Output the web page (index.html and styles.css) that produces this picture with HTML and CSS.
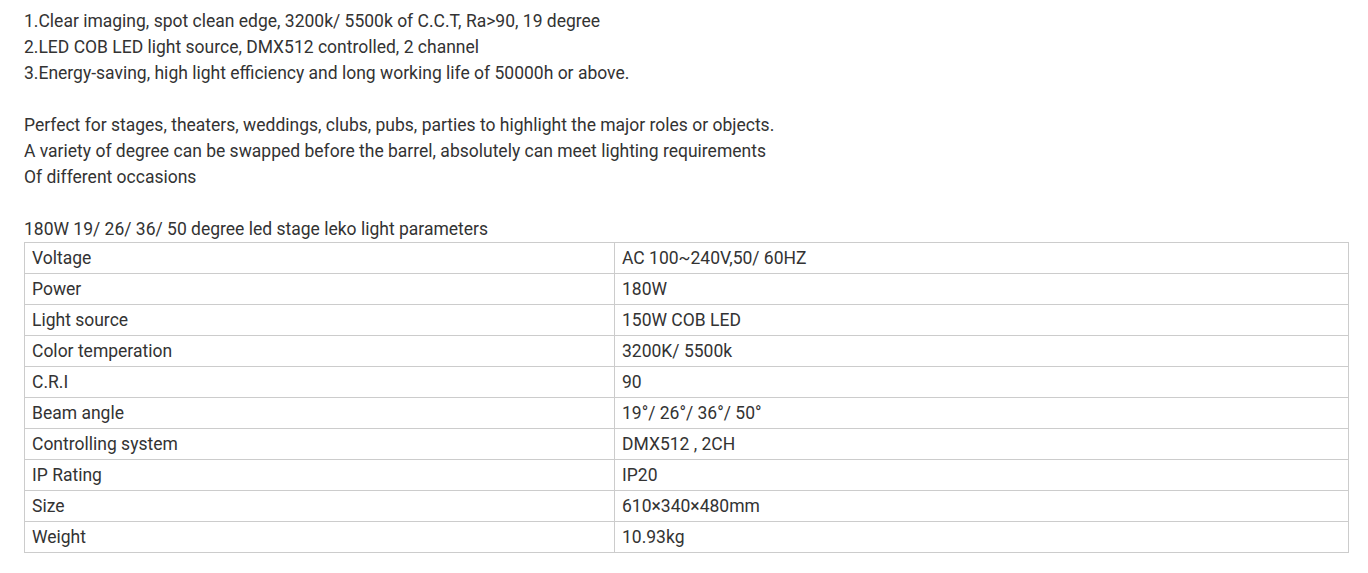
FILE: index.html
```html
<!DOCTYPE html>
<html>
<head>
<meta charset="utf-8">
<link rel="stylesheet" href="styles.css">
</head>
<body>
<div class="content">
  <p class="para">1.Clear imaging, spot clean edge, 3200k/ 5500k of C.C.T, Ra&gt;90, 19 degree<br>2.LED COB LED light source, DMX512 controlled, 2 channel<br>3.Energy-saving, high light efficiency and long working life of 50000h or above.</p>
  <p class="para">Perfect for stages, theaters, weddings, clubs, pubs, parties to highlight the major roles or objects.<br>A variety of degree can be swapped before the barrel, absolutely can meet lighting requirements<br>Of different occasions</p>
  <p class="caption">180W 19/ 26/ 36/ 50 degree led stage leko light parameters</p>
  <table class="spec">
    <tr><td class="k">Voltage</td><td>AC 100~240V,50/ 60HZ</td></tr>
    <tr><td class="k">Power</td><td>180W</td></tr>
    <tr><td class="k">Light source</td><td>150W COB LED</td></tr>
    <tr><td class="k">Color temperation</td><td>3200K/ 5500k</td></tr>
    <tr><td class="k">C.R.I</td><td>90</td></tr>
    <tr><td class="k">Beam angle</td><td>19°/ 26°/ 36°/ 50°</td></tr>
    <tr><td class="k">Controlling system</td><td>DMX512 , 2CH</td></tr>
    <tr><td class="k">IP Rating</td><td>IP20</td></tr>
    <tr><td class="k">Size</td><td>610×340×480mm</td></tr>
    <tr><td class="k">Weight</td><td>10.93kg</td></tr>
  </table>
</div>
</body>
</html>
```
FILE: styles.css
```css
html, body {
  margin: 0;
  padding: 0;
  background: #fff;
}
body {
  font-family: Roboto, "Liberation Sans", sans-serif;
  font-size: 17.5px;
  line-height: 26px;
  color: #333;
}
.content {
  padding: 8px 0 0 24px;
  width: 1325px;
}
.para {
  margin: 0 0 26px 0;
}
.caption {
  margin: 0;
}
.spec {
  width: 1325px;
  border-collapse: collapse;
}
.spec td {
  border: 1px solid #ccc;
  padding: 2px 7px;
  line-height: 26px;
  vertical-align: middle;
}
.spec td.k {
  width: 575px;
}
```
